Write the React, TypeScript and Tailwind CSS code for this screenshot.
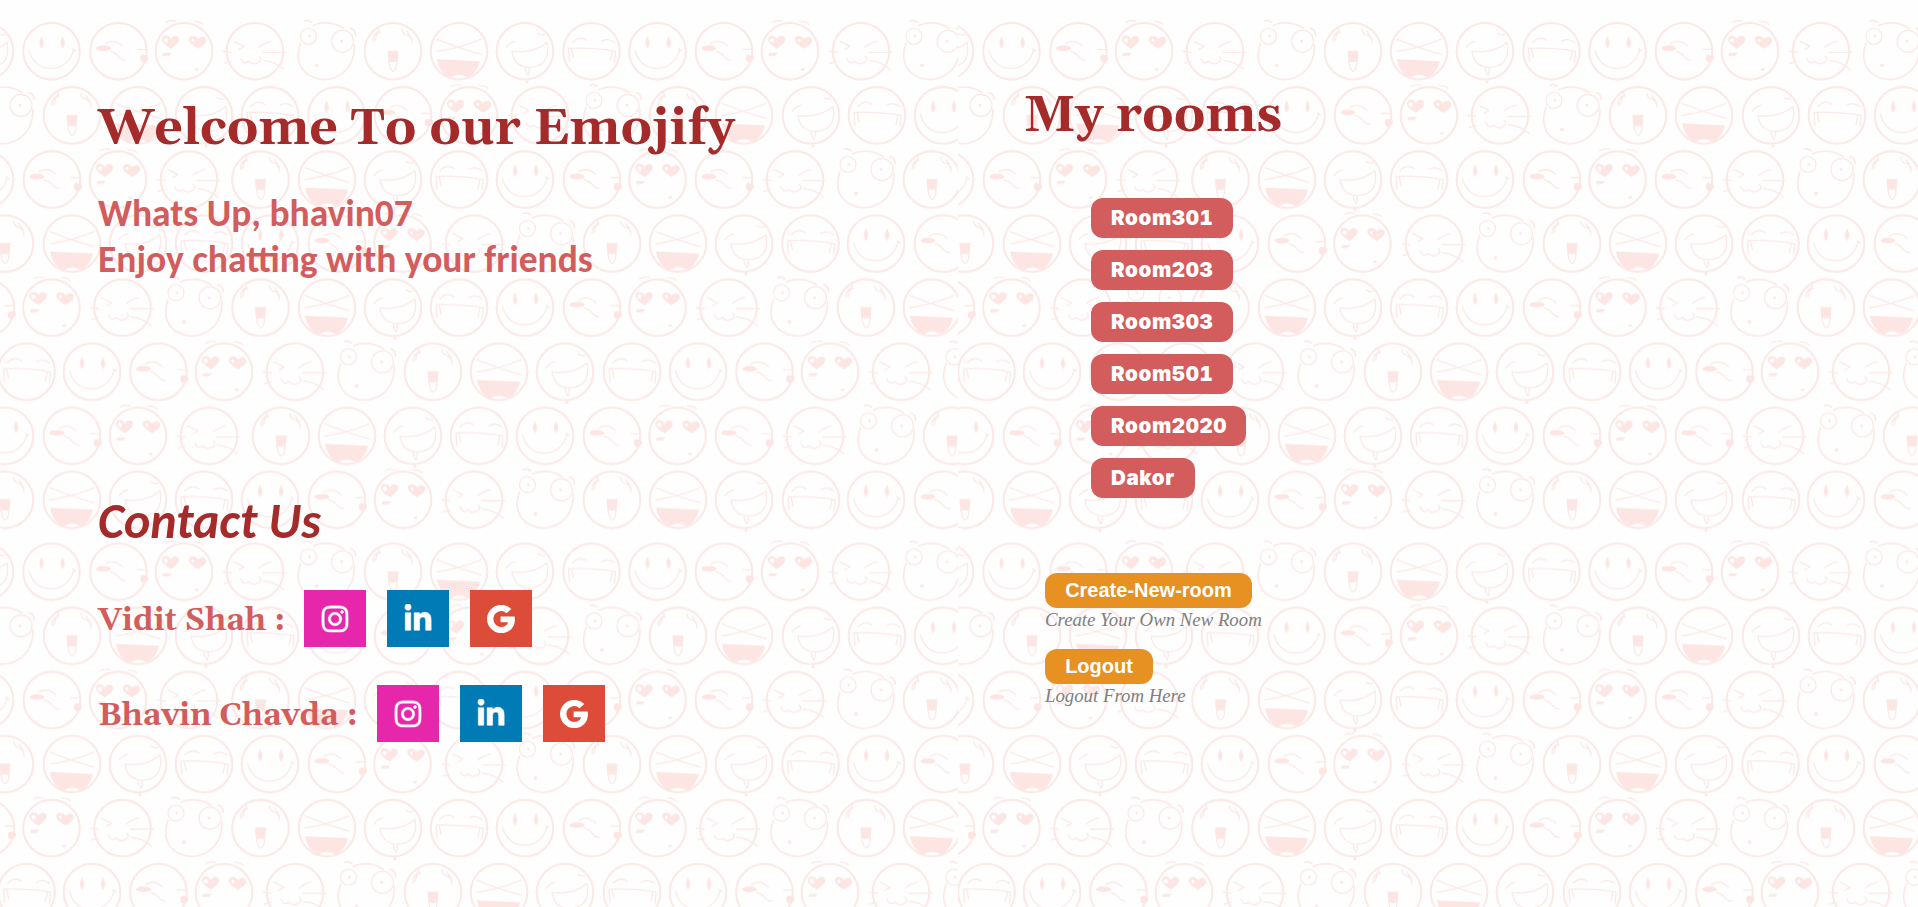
import React from 'react';
import { FaGoogle, FaInstagram, FaLinkedinIn } from 'react-icons/fa';

type Face = 'smile' | 'kiss' | 'heart' | 'cat' | 'bulge' | 'tongue' | 'laugh' | 'drool' | 'grin';

const LINE = '#fae9e7';
const FILL = '#fce5e2';

const circle = <circle r="28.3" strokeWidth="2.1" />;

const faces: Record<Face, React.ReactNode> = {
  smile: (
    <>
      {circle}
      <path d="M-22.500-1q5 18 22 18t23-19M21-2.500l3 2" />
      <path fill={FILL} strokeWidth=".8" d="M-10-14q-3.500 5 0 11q4-5 0-11zM11-14q-3.500 5 0 11q4-5 0-11z" />
    </>
  ),
  kiss: (
    <>
      {circle}
      <ellipse cx="-15" cy="-3" rx="7.500" ry="2.800" fill={FILL} stroke="none" />
      <path d="M-13-8q9-5 17 3M-8 0q6 2 8 5q3 4 7 4M19-2h8" />
      <path fill={FILL} stroke="none" d="M22 5q2-3 4-1q4-1 4 3q-1 4-6 4q-3-2-2-6z" />
    </>
  ),
  heart: (
    <>
      {circle}
      <path d="M-18-29q5-3 10-1M10-30q6 0 9 3" />
      <path fill={FILL} strokeWidth=".8" d="M-13-3q-9-5-9-9q1-5 6-3q2 1 3 3q2-4 6-3q4 3 0 7zM14-3q-9-5-9-9q1-4 5-3q3 1 4 3q3-3 6-2q4 3 0 7z" />
      <circle cx="-18" cy="-11" r="2.800" fill="#fffefe" />
      <circle cx="9" cy="-11" r="1.600" fill="#fffefe" stroke="none" />
      <path fill={FILL} d="M-20 2h7l-2 2h-6zM11 18l3-1l-1 2z" />
    </>
  ),
  cat: (
    <>
      {circle}
      <path d="M-21-10l10 5M-11-5l-5 3M16-10q-8 2-12 6M-14 7q2 7 8 3q5 5 11 0q2-3-1-5M8 1h23M8 9q12 1 21 9M-32 0l8 1M-31 12l7-2" />
    </>
  ),
  bulge: (
    <>
      <path strokeWidth="1.700" d="M-26-8q-7 20 7 31q16 10 32 1q15-9 15-30M-13-26q16-6 30 3M-22-30q3-2 7 1M24-23q5 1 5 7" />
      <circle cx="-18" cy="-15" r="8" />
      <circle cx="16" cy="-10" r="11" />
      <circle cx="-17" cy="-15" r=".8" fill={LINE} />
      <circle cx="15" cy="-10" r=".8" fill={LINE} />
      <circle cx="-10" cy="14" r="1.300" fill={LINE} />
    </>
  ),
  tongue: (
    <>
      {circle}
      <path d="M-20-10q0-8 7-9l-2-5M-19-16l4-4l-3 9M9-22q0 5 6 6q4 3 4 8M14-20l5 8" />
      <path fill={FILL} d="M-5 0h10l-1 10h-8z" />
      <path d="M-4 10q1 9 4 10q4-1 4-10" />
    </>
  ),
  laugh: (
    <>
      {circle}
      <path d="M-22-12q22 9 44 15M22-12q-22 9-44 12" />
      <path fill={FILL} stroke="none" d="M-22 8l43 2q-2 9-9 15l-4 1q-9-5-17 1q-11-6-13-19z" />
    </>
  ),
  drool: (
    <>
      {circle}
      <path d="M-19-4q4-5 9-6M13-18q4 3 7 1M-13 0q21 3 35-9q4 24-17 25q-16 0-18-16zM0 17q1 5 3 7q2-3 1-7" />
      <circle cx="2" cy="30.500" r="1" fill={FILL} />
    </>
  ),
  grin: (
    <>
      {circle}
      <path d="M-19-9q7-7 14-2M10-10q6-4 13 1M-22 10l-1-13q25-1 47 3l-1 11M-20-3l2 9M21 0l-2 9" />
    </>
  ),
};

const rows: { y: number; items: [Face, number][] }[] = [
  { y: 51.3, items: [['drool', -15], ['smile', 51.5], ['kiss', 118.5], ['heart', 184], ['cat', 255], ['bulge', 326.5], ['tongue', 393], ['laugh', 459], ['drool', 525], ['grin', 591.5], ['smile', 657.5], ['kiss', 724], ['heart', 790], ['cat', 861], ['bulge', 932]] },
  { y: 115.4, items: [['bulge', 5], ['tongue', 72], ['laugh', 138], ['drool', 204], ['grin', 270], ['smile', 336.5], ['kiss', 403], ['heart', 469], ['cat', 540], ['bulge', 612], ['tongue', 678], ['laugh', 744], ['drool', 811], ['grin', 877], ['smile', 943]] },
  { y: 179.5, items: [['smile', -15], ['kiss', 52], ['heart', 118], ['cat', 189], ['tongue', 260.5], ['laugh', 327], ['drool', 393], ['grin', 459], ['smile', 525], ['kiss', 592], ['heart', 657.5], ['kiss', 724], ['cat', 795], ['bulge', 866], ['tongue', 932]] },
  { y: 243.6, items: [['tongue', 5], ['laugh', 72], ['drool', 138], ['grin', 204], ['smile', 270], ['kiss', 337], ['heart', 402.5], ['cat', 474], ['bulge', 545.5], ['tongue', 612], ['laugh', 678], ['drool', 744], ['grin', 810.5], ['smile', 876], ['kiss', 943]] },
  { y: 307.7, items: [['kiss', -14], ['heart', 51.5], ['cat', 122.5], ['bulge', 194], ['tongue', 260.5], ['laugh', 327], ['drool', 393], ['grin', 459], ['smile', 525], ['kiss', 592], ['heart', 657.5], ['cat', 728.5], ['bulge', 799.5], ['tongue', 866], ['laugh', 932]] },
  { y: 371.8, items: [['grin', 26.5], ['smile', 92], ['kiss', 158.5], ['heart', 224], ['cat', 295], ['bulge', 366.5], ['tongue', 433], ['laugh', 499], ['drool', 565], ['grin', 632], ['smile', 698], ['kiss', 764.5], ['heart', 830], ['cat', 901], ['bulge', 972]] },
  { y: 435.9, items: [['smile', 5], ['kiss', 72], ['heart', 138], ['cat', 209], ['tongue', 281], ['laugh', 347], ['drool', 413], ['grin', 479], ['smile', 545], ['kiss', 612], ['heart', 677.5], ['kiss', 744], ['cat', 815], ['bulge', 886.5], ['tongue', 952]] },
  { y: 499.8, items: [['tongue', 5], ['laugh', 72], ['drool', 138], ['grin', 204], ['smile', 270], ['kiss', 337], ['heart', 403], ['cat', 474], ['bulge', 545.5], ['tongue', 612], ['laugh', 678], ['drool', 744], ['grin', 811], ['smile', 876], ['kiss', 943]] },
];

function Wallpaper() {
  return (
    <svg className="absolute inset-0 h-full w-full blur-[0.5px]" aria-hidden="true">
      <defs>
        <pattern id="faces" x="-2" y="15" width="960" height="520.5" patternUnits="userSpaceOnUse">
          <g transform="translate(2 -15)" fill="none" stroke={LINE} strokeWidth="1.3" strokeLinecap="round" strokeLinejoin="round">
            {rows.map((row) =>
              row.items.map(([face, x]) => (
                <g key={`${row.y}-${x}`} transform={`translate(${x} ${row.y})`}>
                  {faces[face]}
                </g>
              )),
            )}
          </g>
        </pattern>
      </defs>
      <rect y="15" width="100%" height="100%" fill="url(#faces)" />
    </svg>
  );
}

function Contact({ name, className }: { name: string; className: string }) {
  return (
    <div className="flex h-[57px] items-center text-[30px] text-white">
      <div className={className}>
        <span className="whitespace-nowrap font-[Gelasio,Georgia,'Liberation_Serif',serif] text-[31.2px] leading-10 font-bold text-[#d35c5c]">{name}</span>
      </div>
      <div className="flex gap-[21px]">
        <a className="flex h-[57px] w-[62px] items-center justify-center bg-[#e626ab]"><FaInstagram className="[stroke-width:8]" /></a>
        <a className="flex h-[57px] w-[62px] items-center justify-center bg-[#007bb6]"><FaLinkedinIn className="[stroke-width:10]" /></a>
        <a className="flex h-[57px] w-[62px] items-center justify-center bg-[#dd4b39]"><FaGoogle className="text-[28px] [stroke-width:22]" /></a>
      </div>
    </div>
  );
}

const rooms = [
  { name: 'Room301', size: 'w-[142px]' },
  { name: 'Room203', size: 'w-[142px]' },
  { name: 'Room303', size: 'w-[142px]' },
  { name: 'Room501', size: 'w-[142px]' },
  { name: 'Room2020', size: 'w-[155px]' },
  { name: 'Dakor', size: 'w-[104px]' },
];

export default function App() {
  return (
    <div className="relative h-[907px] w-full overflow-hidden bg-[#fffefe]">
      <Wallpaper />
      <main className="relative flex">
        <section className="w-[1024px] pt-[100px] pl-[98px]">
          <h1 className="h-[60px] whitespace-nowrap font-[Gelasio,Georgia,'Liberation_Serif',serif] text-[50px] leading-[60px] font-bold text-[#a52a2a]">Welcome To our Emojify</h1>
          <div className="mt-[30px] whitespace-nowrap font-[Carlito,Calibri,Lato,sans-serif] text-[37.5px] leading-[46px] font-bold text-[#d35c5c]">
            <p>Whats Up, bhavin07</p>
            <p>Enjoy chatting with your friends</p>
          </div>
          <h2 className="mt-[209px] h-[60px] font-[Carlito,Calibri,Lato,sans-serif] text-[50px] leading-[60px] font-bold text-[#a52a2a] italic">Contact Us</h2>
          <div className="mt-[39px] flex flex-col gap-[38px]">
            <Contact name="Vidit Shah :" className="w-[206px]" />
            <Contact name="Bhavin Chavda :" className="w-[279px]" />
          </div>
        </section>
        <section className="pt-[87px]">
          <h1 className="h-[60px] whitespace-nowrap font-[Gelasio,Georgia,'Liberation_Serif',serif] text-[50px] leading-[60px] font-bold text-[#a52a2a]">My rooms</h1>
          <div className="mt-[51px] ml-[67px] flex flex-col items-start gap-3">
            {rooms.map((room) => (
              <button key={room.name} className={`${room.size} flex h-10 items-center rounded-[12px] bg-[#d35c5c] pt-px pl-5 font-[Inter,sans-serif] text-[20.5px] font-black tracking-[0.6px] text-white tabular-nums`}>
                {room.name}
              </button>
            ))}
          </div>
          <div className="mt-[75px] ml-[21px] flex flex-col items-start">
            <button className="h-[35px] w-[207px] rounded-[12px] bg-[#e69122] pb-[2px] font-['Liberation_Sans',sans-serif] text-[20px] font-bold text-white">Create-New-room</button>
            <p className="h-[41px] font-['Liberation_Serif',serif] text-[18.8px] leading-[23px] text-[#808080] italic">Create Your Own New Room</p>
            <button className="h-[35px] w-[108px] rounded-[12px] bg-[#e69122] pb-[2px] font-['Liberation_Sans',sans-serif] text-[20px] font-bold text-white">Logout</button>
            <p className="font-['Liberation_Serif',serif] text-[18.8px] leading-[23px] text-[#808080] italic">Logout From Here</p>
          </div>
        </section>
      </main>
    </div>
  );
}
